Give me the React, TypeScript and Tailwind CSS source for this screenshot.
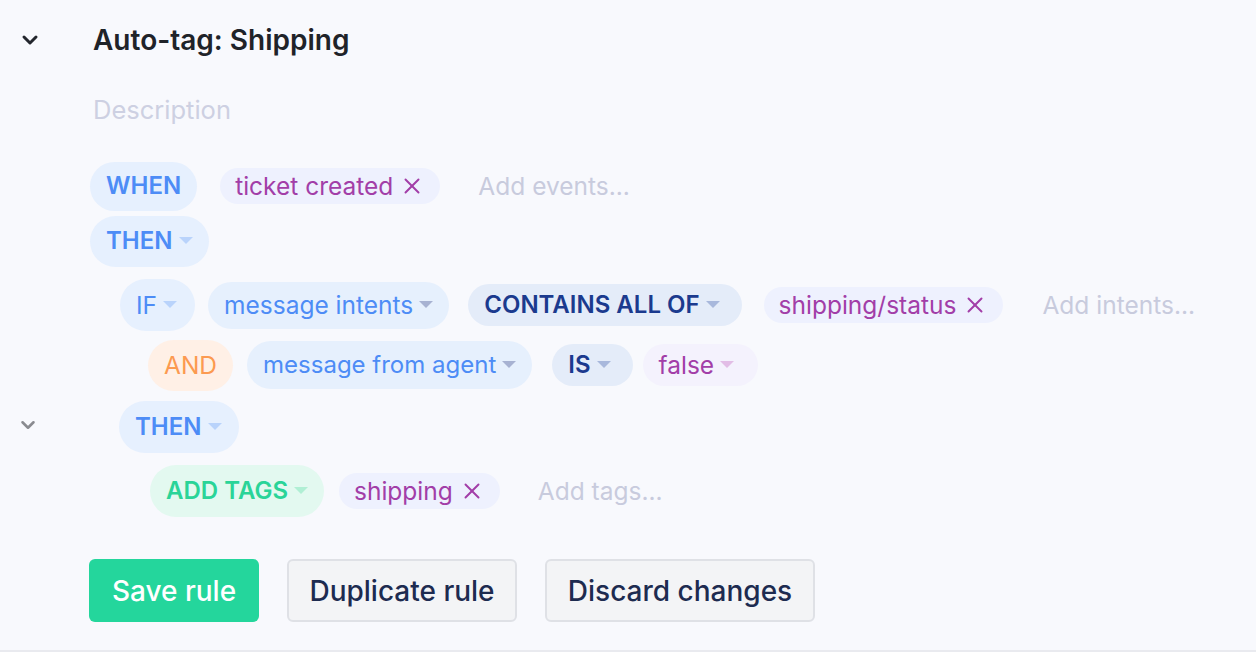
import { ChevronDown, X } from "lucide-react";
import type { ReactNode } from "react";

const Caret = ({ color }: { color: string }) => (
    <svg width="14" height="8" viewBox="0 0 14 8" className="ml-[6px] shrink-0">
        <path d="M0 0 L14 0 L7 7 Z" fill={color} />
    </svg>
);

interface PillProps {
    children: ReactNode;
    className: string;
    caret?: string;
}

const Pill = ({ children, className, caret }: PillProps) => (
    <div
        className={
            "flex items-center rounded-full pl-4 whitespace-nowrap " +
            className
        }
    >
        <span>{children}</span>
        {caret && <Caret color={caret} />}
    </div>
);

const Chip = ({ label }: { label: string }) => (
    <div className="flex h-[36px] items-center rounded-full bg-[#eef1fe] pl-[15px] pr-[15px] text-[#a23ea8] whitespace-nowrap">
        <span>{label}</span>
        <X className="ml-[6px] size-[26px]" strokeWidth={1.8} />
    </div>
);

const Placeholder = ({ children }: { children: ReactNode }) => (
    <span className="whitespace-nowrap text-[#c8cbdd]">{children}</span>
);

export default function App() {
    return (
        <div
            className="flex h-[652px] w-full flex-col border-b-2 border-[#e9eaef] bg-[#f8f9fd] text-[24.5px]"
            style={{ fontFamily: "Inter, 'Noto Sans', sans-serif" }}
        >
            {/* header */}
            <div className="mt-[22px] flex h-[36px] items-center">
                <div className="w-[93px] pl-[18px]">
                    <ChevronDown className="size-6 text-[#23262d]" strokeWidth={3} />
                </div>
                <h1 className="text-[28px] font-semibold text-[#1f2329]">
                    Auto-tag: Shipping
                </h1>
            </div>
            <div className="mt-[34px] h-[36px] pl-[93px] text-[25.5px] leading-9 text-[#cdd0e2]">
                Description
            </div>

            {/* rule body */}
            <div className="mt-[33px] flex flex-col pl-[90px]">
                <div className="flex h-[50px] items-center">
                    <Pill className="h-[49px] bg-[#e6f0fe] pr-4 text-[24px] font-semibold text-[#4d8cf6]">
                        WHEN
                    </Pill>
                    <div className="ml-[23px]">
                        <Chip label="ticket created" />
                    </div>
                    <div className="ml-[38px]">
                        <Placeholder>Add events...</Placeholder>
                    </div>
                </div>

                <div className="mt-[4px] flex h-[52px] items-center">
                    <Pill
                        className="h-[51px] bg-[#e6f0fe] pr-[16px] text-[24px] font-semibold text-[#4d8cf6]"
                        caret="#b9d3fb"
                    >
                        THEN
                    </Pill>
                </div>

                <div className="mt-[12px] flex h-[52px] items-center pl-[30px]">
                    <Pill
                        className="h-[52px] bg-[#e6f0fe] pr-[18px] text-[#4d8cf6]"
                        caret="#b9d3fb"
                    >
                        IF
                    </Pill>
                    <Pill
                        className="ml-[13px] h-[47px] bg-[#e6f0fd] pr-4 text-[#4d8cf6]"
                        caret="#a7b2d2"
                    >
                        message intents
                    </Pill>
                    <Pill
                        className="ml-[19px] h-[42px] bg-[#e4ecf9] pr-[22px] text-[24px] font-semibold text-[#1b3a8e]"
                        caret="#a8b8dc"
                    >
                        CONTAINS ALL OF
                    </Pill>
                    <div className="ml-[22px]">
                        <Chip label="shipping/status" />
                    </div>
                    <div className="ml-[39px]">
                        <Placeholder>Add intents...</Placeholder>
                    </div>
                </div>

                <div className="mt-[8px] flex h-[52px] items-center pl-[58px]">
                    <Pill className="h-[51px] bg-[#fff0e6] pr-4 text-[#fc9a50]">AND</Pill>
                    <Pill
                        className="ml-[14px] h-[48px] bg-[#e6f0fd] pr-4 text-[24px] text-[#4d8cf6]"
                        caret="#a7b2d2"
                    >
                        message from agent
                    </Pill>
                    <Pill
                        className="ml-[20px] h-[42px] bg-[#e4ecf9] pr-[22px] text-[24px] font-semibold text-[#1b3a8e]"
                        caret="#a8b8dc"
                    >
                        IS
                    </Pill>
                    <Pill
                        className="ml-[10px] h-[42px] bg-[#f4f2fd] pr-[24px] text-[#a23ea8]"
                        caret="#e2bde6"
                    >
                        false
                    </Pill>
                </div>

                <div className="relative mt-[10px] flex h-[52px] items-center pl-[29px]">
                    <ChevronDown
                        className="absolute left-[-73px] top-[13px] size-[22px] text-[#8a8b90]"
                        strokeWidth={2.8}
                    />
                    <Pill
                        className="h-[52px] bg-[#e6f0fe] pr-[17px] text-[24px] font-semibold text-[#4d8cf6]"
                        caret="#b9d3fb"
                    >
                        THEN
                    </Pill>
                </div>

                <div className="mt-[12px] flex h-[52px] items-center pl-[60px]">
                    <Pill
                        className="h-[52px] bg-[#e3f9f0] pr-4 text-[24px] font-semibold text-[#2ad498]"
                        caret="#b0efd4"
                    >
                        ADD TAGS
                    </Pill>
                    <div className="ml-[15px]">
                        <Chip label="shipping" />
                    </div>
                    <div className="ml-[38px]">
                        <Placeholder>Add tags...</Placeholder>
                    </div>
                </div>

                <div className="mt-[42px] flex items-center gap-[28px] text-[28px] font-medium">
                    <button className="-ml-px h-[63px] w-[170px] rounded-md bg-[#24d69c] text-white">
                        Save rule
                    </button>
                    <button className="h-[63px] w-[230px] rounded-md border-2 border-[#dfe1e6] bg-[#f3f4f6] text-[#1d2b50]">
                        Duplicate rule
                    </button>
                    <button className="h-[63px] w-[270px] rounded-md border-2 border-[#dfe1e6] bg-[#f3f4f6] text-[#1d2b50]">
                        Discard changes
                    </button>
                </div>
            </div>
        </div>
    );
}
